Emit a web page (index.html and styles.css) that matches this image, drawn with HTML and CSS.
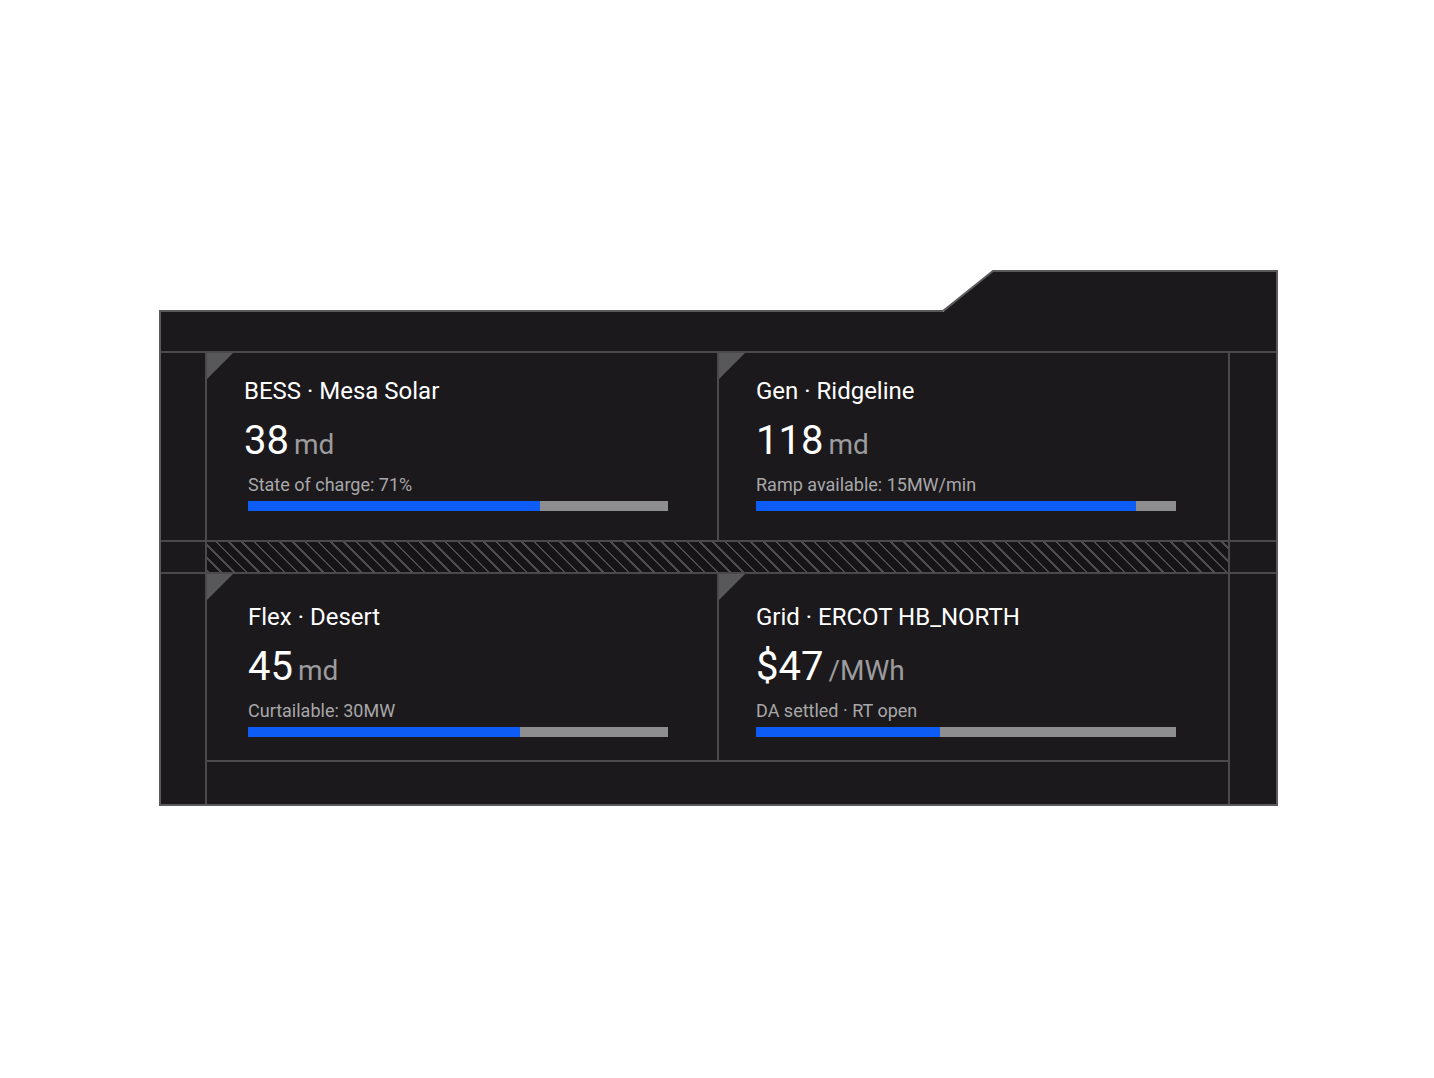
FILE: index.html
```html
<!DOCTYPE html>
<html lang="en">

<head>
    <meta charset="UTF-8">
    <meta name="viewport" content="width=device-width, initial-scale=1.0">
    <title>Assets</title>

    <link rel="stylesheet" href="styles.css">
</head>

<body>

    <section class="board">
        <div class="board__top">
            <div class="board__edge"></div>
            <svg class="board__tab" width="335" height="42" viewBox="0 0 335 42">
                <polygon points="0,42 50,1 334,1 334,42" fill="#1b191c" />
                <polyline points="0,41 50,1 334,1 334,42" fill="none" stroke="#5a595b" stroke-width="2" />
            </svg>
        </div>

        <div class="board__body">
            <div class="board__head"></div>

            <div class="board__row board__row--first">
                <div class="board__side"></div>
                <div class="board__cards">
                    <div class="card card--left card--shift">
                        <h3 class="card__title">BESS · Mesa Solar</h3>
                        <div class="card__value">38<span>md</span></div>
                        <p class="card__label">State of charge: 71%</p>
                        <div class="card__bar"><span style="width: 69.5%"></span></div>
                    </div>
                    <div class="card">
                        <h3 class="card__title">Gen · Ridgeline</h3>
                        <div class="card__value">118<span>md</span></div>
                        <p class="card__label">Ramp available: 15MW/min</p>
                        <div class="card__bar"><span style="width: 90.5%"></span></div>
                    </div>
                </div>
                <div class="board__side"></div>
            </div>

            <div class="board__row board__row--band">
                <div class="board__side"></div>
                <div class="board__hatch"></div>
                <div class="board__side"></div>
            </div>

            <div class="board__row board__row--second">
                <div class="board__side"></div>
                <div class="board__cards">
                    <div class="card card--left">
                        <h3 class="card__title">Flex · Desert</h3>
                        <div class="card__value">45<span>md</span></div>
                        <p class="card__label">Curtailable: 30MW</p>
                        <div class="card__bar"><span style="width: 64.8%"></span></div>
                    </div>
                    <div class="card">
                        <h3 class="card__title">Grid · ERCOT HB_NORTH</h3>
                        <div class="card__value">$47<span>/MWh</span></div>
                        <p class="card__label">DA settled · RT open</p>
                        <div class="card__bar"><span style="width: 43.8%"></span></div>
                    </div>
                </div>
                <div class="board__side"></div>
            </div>

            <div class="board__row board__row--foot">
                <div class="board__side"></div>
                <div></div>
                <div class="board__side"></div>
            </div>
        </div>
    </section>

</body>

</html>
```

FILE: styles.css
```css
* {
    box-sizing: border-box;
}

body {
    margin: 0;
    background: #fff;
    font-family: "Roboto", "Liberation Sans", sans-serif;
}

/* ========== BOARD =========== */
.board {
    width: 1119px;
    margin: 270px 0 0 159px;
}

.board__top {
    display: flex;
    align-items: flex-end;
    height: 42px;
}

.board__edge {
    flex: 1 1 auto;
    border-bottom: 2px solid #5a595b;
}

.board__tab {
    display: block;
    flex: 0 0 335px;
}

.board__body {
    background: #1b191c;
    border: 2px solid #5a595b;
    border-top: 0;
}

.board__head {
    height: 41px;
    border-bottom: 2px solid #4a494b;
}

.board__row {
    display: grid;
    grid-template-columns: 46px 1fr 48px;
}

.board__side:first-child {
    border-right: 2px solid #4a494b;
}

.board__side:last-child {
    border-left: 2px solid #4a494b;
}

.board__row--first {
    height: 189px;
    border-bottom: 2px solid #4a494b;
}

.board__row--band {
    height: 32px;
    border-bottom: 2px solid #4a494b;
}

.board__row--second {
    height: 188px;
}

.board__row--second .board__cards {
    border-bottom: 2px solid #4a494b;
}

.board__row--foot {
    height: 42px;
}

.board__hatch {
    background: repeating-linear-gradient(45deg, #4d4c4e 0 1.8px, #161417 1.8px 9px);
}

.board__cards {
    display: grid;
    grid-template-columns: 512px 1fr;
}

/* ========== CARD =========== */
.card {
    position: relative;
    padding: 24px 0 0 37px;
    color: #fff;
}

.board__row--second .card {
    padding-top: 29px;
}

.card--left {
    padding-left: 41px;
    border-right: 2px solid #4a494b;
}

.card::before {
    content: "";
    position: absolute;
    top: 0;
    left: 0;
    border-top: 26px solid #58575a;
    border-right: 26px solid transparent;
}

.card__title {
    margin: 0 0 12px;
    font-size: 24px;
    line-height: 28px;
    font-weight: 400;
}

.card__value {
    font-size: 40px;
    line-height: 48px;
}

.card__value span {
    margin-left: 5px;
    font-size: 28px;
    line-height: 1;
    color: #9c9b9d;
}

.card--shift .card__title,
.card--shift .card__value {
    margin-left: -4px;
}

.card__label {
    margin: 9px 0 0;
    font-size: 18px;
    line-height: 22px;
    color: #a8a7a9;
}

.card__bar {
    width: 420px;
    height: 10px;
    margin-top: 5px;
    background: #8e8d8f;
}

.card__bar span {
    display: block;
    height: 100%;
    background: #0d5cf5;
}
```
